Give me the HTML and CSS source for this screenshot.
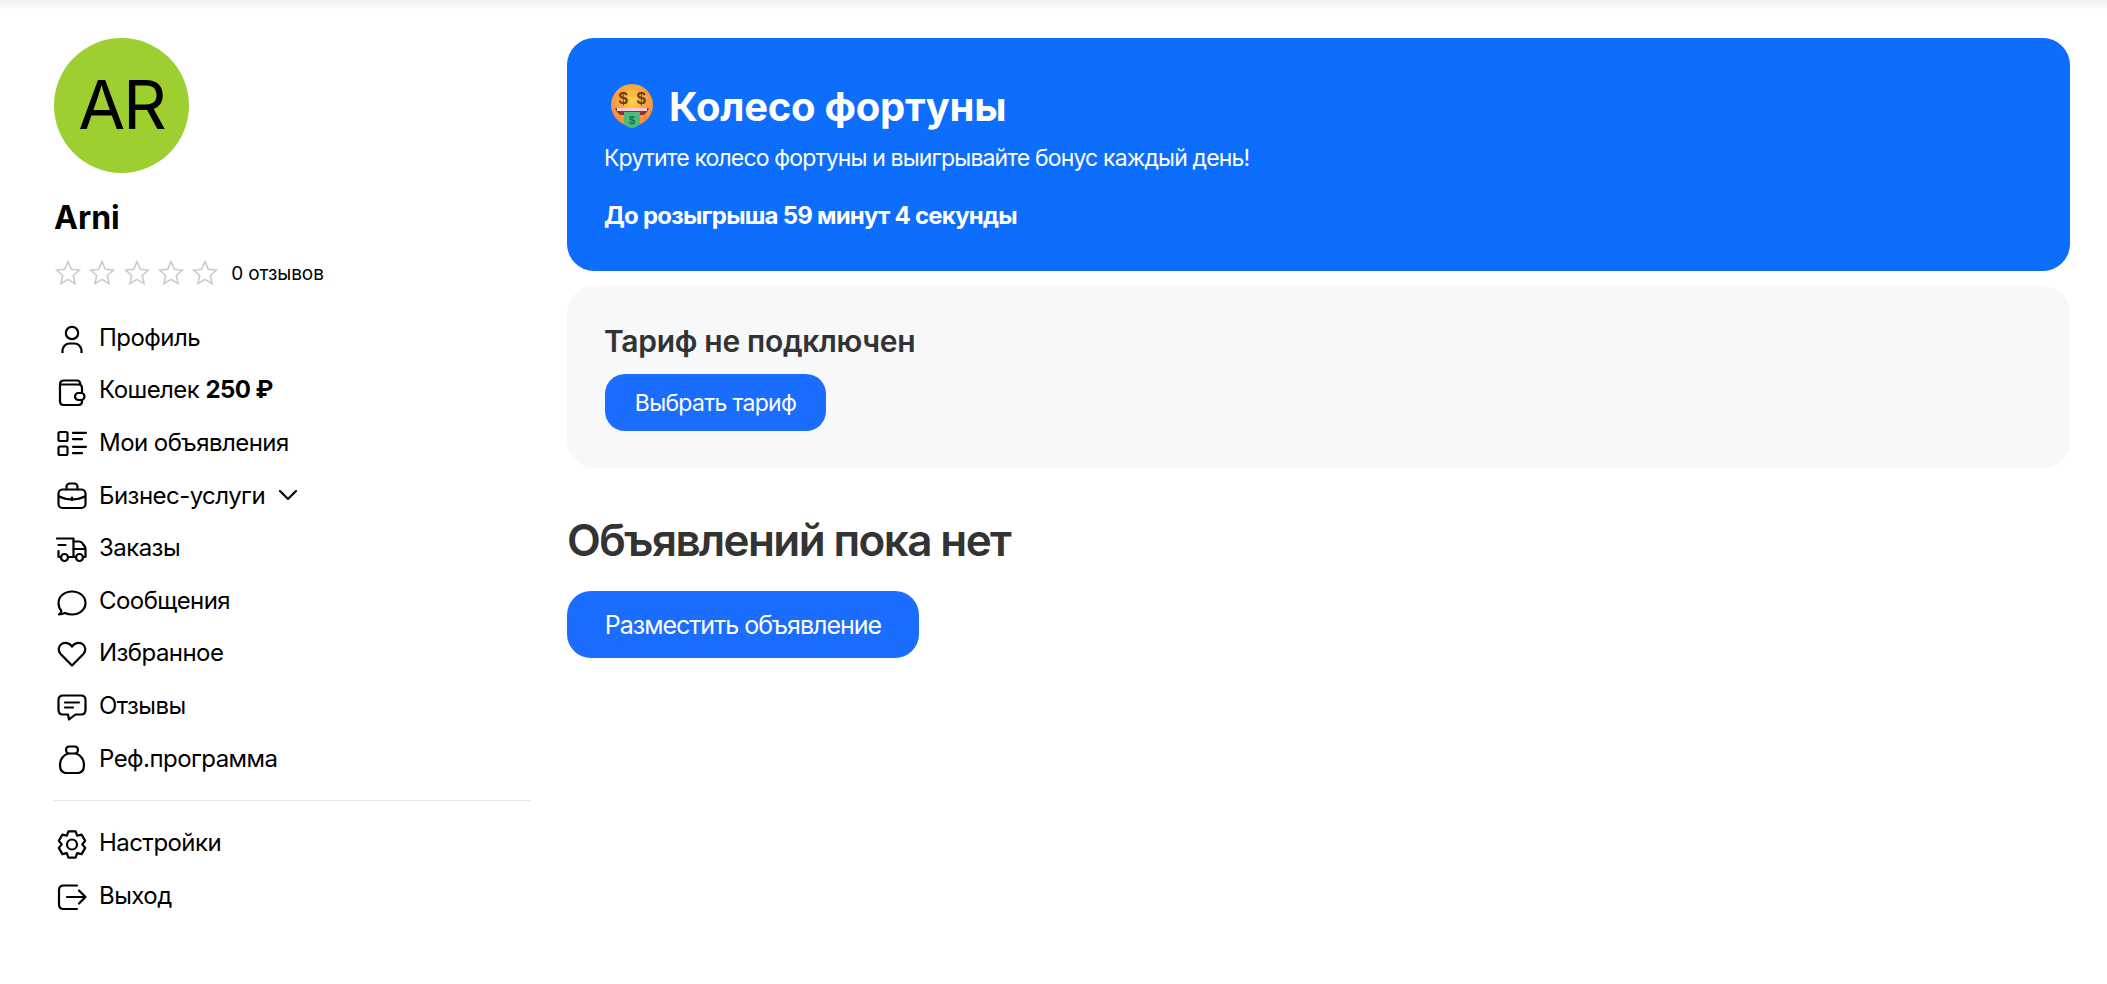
FILE: index.html
```html
<!DOCTYPE html>
<html lang="ru">
  <head>
    <meta charset="UTF-8" />
    <title>Профиль</title>
    <link rel="stylesheet" href="styles.css">
  </head>
  <body>
    <div class="top-shade"></div>

    <div class="page">
      <aside class="side">
        <div class="avatar">AR</div>
        <div class="name">Arni</div>

        <div class="rating">
          <div class="stars">
            <svg class="star" viewBox="0 0 24 24"><path d="M12 1.500l3.100 7 7.400.8-5.600 5 1.600 7.500-6.500-3.900-6.500 3.900 1.600-7.500-5.600-5 7.400-.8z"/></svg>
            <svg class="star" viewBox="0 0 24 24"><path d="M12 1.500l3.100 7 7.400.8-5.600 5 1.600 7.500-6.500-3.900-6.500 3.900 1.600-7.500-5.600-5 7.400-.8z"/></svg>
            <svg class="star" viewBox="0 0 24 24"><path d="M12 1.500l3.100 7 7.400.8-5.600 5 1.600 7.500-6.500-3.900-6.500 3.900 1.600-7.500-5.600-5 7.400-.8z"/></svg>
            <svg class="star" viewBox="0 0 24 24"><path d="M12 1.500l3.100 7 7.400.8-5.600 5 1.600 7.500-6.500-3.900-6.500 3.900 1.600-7.500-5.600-5 7.400-.8z"/></svg>
            <svg class="star" viewBox="0 0 24 24"><path d="M12 1.500l3.100 7 7.400.8-5.600 5 1.600 7.500-6.500-3.900-6.500 3.900 1.600-7.500-5.600-5 7.400-.8z"/></svg>
          </div>
          <span class="reviews">0 отзывов</span>
        </div>

        <ul class="menu menu-main">
          <li>
            <svg class="ico" viewBox="0 0 32 32"><circle cx="16" cy="12" r="6.200"/><path d="M6.500 32v-2c0-4.300 3-7.500 7-7.500h5c4 0 7 3.200 7 7.500v2"/></svg>
            <span>Профиль</span>
          </li>
          <li>
            <svg class="ico" viewBox="0 0 32 32"><path d="M26 19v-5c0-2-1.300-3.500-3.500-3.500H4.500M26 26v1.500c0 2.200-1.300 3.500-3.500 3.500H8c-2.500 0-4-1.500-4-4V10.500C4 8 5.500 6.500 8 6.500h13c2 0 3.200 1.500 3.500 4"/><rect x="19" y="19" width="9.500" height="7" rx="3.500"/></svg>
            <span>Кошелек <b>250 ₽</b></span>
          </li>
          <li>
            <svg class="ico" viewBox="0 0 32 32"><rect x="2.500" y="6" width="9" height="9" rx="1.500"/><rect x="2.500" y="20.500" width="9" height="8.500" rx="1.500"/><path d="M17 6.800h13M17 13.200h9M17 20.800h13M17 27.200h9"/></svg>
            <span>Мои объявления</span>
          </li>
          <li>
            <svg class="ico" viewBox="0 0 32 32"><rect x="2.500" y="10.500" width="27" height="18.500" rx="4"/><path d="M10.500 10.500V8c0-2 1.500-3.500 3.500-3.500h4c2 0 3.500 1.500 3.500 3.500v2.500"/><path d="M3 17.500c4 2 8.500 2.800 13 2.800s9-.8 13-2.800"/><path d="M16 18.500v2.500"/></svg>
            <span>Бизнес-услуги</span>
            <svg class="chevron" viewBox="0 0 18 10"><path d="M1 1l8 8 8-8"/></svg>
          </li>
          <li>
            <svg class="ico" viewBox="0 0 32 32"><path d="M1 6.500h16.500v18.500h-5M4.500 25H2.500v-6M2.500 13h7"/><path d="M17.500 9.500h5.500c1.500 0 2.500.6 3.300 1.700l2.400 3.300c.5.700.8 1.500.8 2.300V25H27M17.500 25H19.500M17.500 17h12"/><circle cx="8.500" cy="25.500" r="3.500"/><circle cx="23.500" cy="25.500" r="3.500"/></svg>
            <span>Заказы</span>
          </li>
          <li>
            <svg class="ico" viewBox="0 0 32 32"><path d="M3 30.500c1.800-1.200 2.600-2.500 2.200-3.900C3.500 24.700 2.500 22 2.500 19 2.500 12.400 8.500 7.500 16 7.500s13.500 4.900 13.500 11.500S23.500 30.500 16 30.500c-2.700 0-5-.6-7-1.600-1.800 1.100-3.800 1.600-6 1.600z"/></svg>
            <span>Сообщения</span>
          </li>
          <li>
            <svg class="ico" viewBox="0 0 32 32"><path d="M16 28.500L4.800 17.300C1.500 14 2.200 9 5.700 6.900 9 5 13.500 6 16 9.500 18.500 6 23 5 26.300 6.900c3.500 2.100 4.200 7.100.9 10.400z"/></svg>
            <span>Избранное</span>
          </li>
          <li>
            <svg class="ico" viewBox="0 0 32 32"><path d="M7 6.500h18c2.800 0 4.500 1.700 4.500 4.500v10c0 2.800-1.700 4.500-4.500 4.500h-5.500L13 30.500l-1-5H7c-2.800 0-4.500-1.700-4.500-4.500V11c0-2.800 1.700-4.500 4.500-4.500z"/><path d="M9 13.500h14M9 18.500h8"/></svg>
            <span>Отзывы</span>
          </li>
          <li>
            <svg class="ico" viewBox="0 0 32 32"><path d="M12 11.500C7 13.500 4 18 4 23c0 5 2.500 8 6.500 8h11c4 0 6.500-3 6.500-8 0-5-3-9.500-8-11.500z"/><path d="M12 11.500c-1.500-1-2-2-2-3.500 0-2.200 1.500-3.500 3.500-3.500h5c2 0 3.500 1.300 3.500 3.500 0 1.500-.5 2.500-2 3.500"/></svg>
            <span>Реф.программа</span>
          </li>
        </ul>

        <div class="line"></div>

        <ul class="menu">
          <li>
            <svg class="ico" viewBox="0 0 32 32"><path d="M12.400 4.300h7.200l1.600 4.300 4.400-1 3.600 6.300-3 3.500 3 3.500-3.600 6.200-4.400-1-1.600 4.600h-7.200l-1.600-4.600-4.400 1-3.600-6.200 3-3.500-3-3.500 3.600-6.300 4.400 1z"/><circle cx="16" cy="17.500" r="5"/></svg>
            <span>Настройки</span>
          </li>
          <li>
            <svg class="ico" viewBox="0 0 32 32"><path d="M21 6.500H7.500c-3 0-4.500 1.500-4.500 4.500v14.500c0 3 1.500 4.500 4.500 4.500H21"/><path d="M11 18h18M23 11.500l6.500 6.500-6.500 6.500"/></svg>
            <span>Выход</span>
          </li>
        </ul>
      </aside>

      <main class="content">
        <section class="promo">
          <h2 class="promo-title">
            <svg class="emoji" viewBox="0 0 46 46">
              <defs>
                <radialGradient id="face" cx="50%" cy="40%" r="60%">
                  <stop offset="0" stop-color="#ffd24a"/>
                  <stop offset="1" stop-color="#f5883a"/>
                </radialGradient>
              </defs>
              <circle cx="23" cy="22" r="21" fill="url(#face)"/>
              <text x="14" y="21" class="emoji-eye">$</text>
              <text x="32" y="21" class="emoji-eye">$</text>
              <path d="M6 25h34c-1 3-3 5-5 7H11c-2-2-4-4-5-7z" fill="#8b2f3c"/>
              <path d="M8 25h30v3H8z" fill="#ffc9d6"/>
              <path d="M15 29h16v9c0 4-3.500 7-8 7s-8-3-8-7z" fill="#4fb87c"/>
              <text x="23" y="41" class="emoji-tongue">$</text>
            </svg>
            <span>Колесо фортуны</span>
          </h2>
          <p class="promo-text">Крутите колесо фортуны и выигрывайте бонус каждый день!</p>
          <p class="promo-timer">До розыгрыша 59 минут 4 секунды</p>
        </section>

        <section class="tariff">
          <h3 class="tariff-title">Тариф не подключен</h3>
          <a class="btn btn-small" href="###">Выбрать тариф</a>
        </section>

        <h1 class="empty-title">Объявлений пока нет</h1>
        <a class="btn btn-big" href="###">Разместить объявление</a>
      </main>
    </div>
  </body>
</html>
```

FILE: styles.css
```css
* {
  box-sizing: border-box;
}

body {
  margin: 0;
  background: #fff;
  color: #000;
  font-family: Inter, "Noto Sans", sans-serif;
}

.top-shade {
  height: 10px;
  background: linear-gradient(#eff1f2, #fff);
}

.page {
  display: flex;
  gap: 37px;
  padding: 28px 37px 0 54px;
}

/* left column */
.side {
  width: 476px;
  flex-shrink: 0;
}

.avatar {
  width: 135px;
  height: 135px;
  padding-bottom: 3px;
  border-radius: 50%;
  background: #9ccf2f;
  display: flex;
  align-items: center;
  justify-content: center;
  font-size: 68px;
  letter-spacing: -2px;
}

.name {
  margin-top: 25px;
  font-size: 32px;
  line-height: 40px;
  font-weight: 700;
}

.rating {
  display: flex;
  align-items: center;
  margin-top: 20px;
  height: 30px;
}

.stars {
  display: flex;
  gap: 8.300px;
  margin: 0 13px 0 1px;
}

.star {
  width: 26px;
  height: 26px;
  fill: none;
  stroke: #c9cbcf;
  stroke-width: 1.5;
}

.reviews {
  font-size: 19px;
  letter-spacing: -0.1px;
}

.menu {
  list-style: none;
  margin: 0;
  padding: 0;
}

.menu-main {
  margin-top: 23px;
}

.menu li {
  display: flex;
  align-items: center;
  height: 52.6px;
  font-size: 24px;
  letter-spacing: -0.55px;
}

.menu b {
  font-weight: 700;
}

.ico {
  width: 32px;
  height: 32px;
  margin: 0 11px 0 2px;
  flex-shrink: 0;
  fill: none;
  stroke: #000;
  stroke-width: 2.2;
  stroke-linecap: round;
  stroke-linejoin: round;
}

.chevron {
  width: 18px;
  height: 10px;
  margin-left: 14px;
  fill: none;
  stroke: #000;
  stroke-width: 2.2;
  stroke-linecap: round;
  stroke-linejoin: round;
}

.line {
  height: 1px;
  margin: 16px 0 15px;
  background: #e6e6e6;
}

/* right column */
.content {
  flex: 1;
}

.promo {
  height: 233px;
  padding: 38px 37px;
  border-radius: 27px;
  background: #0d6efd;
  color: #fff;
}

.promo-title {
  display: flex;
  align-items: center;
  gap: 14px;
  margin: 0;
  padding-left: 5px;
  height: 60px;
  font-size: 40px;
  font-weight: 700;
  letter-spacing: -0.25px;
}

.emoji {
  width: 46px;
  height: 46px;
}

.emoji-eye {
  fill: #6b3a1e;
  font-family: "Liberation Sans", sans-serif;
  font-size: 17px;
  font-weight: 700;
  text-anchor: middle;
}

.emoji-tongue {
  fill: #1f6b48;
  font-family: "Liberation Sans", sans-serif;
  font-size: 11px;
  font-weight: 700;
  text-anchor: middle;
}

.promo-text {
  margin: 6px 0 0;
  font-size: 23px;
  line-height: 32px;
  letter-spacing: -0.85px;
}

.promo-timer {
  margin: 26px 0 0;
  font-size: 24px;
  line-height: 32px;
  font-weight: 700;
  letter-spacing: -0.77px;
}

.tariff {
  height: 182px;
  margin-top: 15px;
  padding: 36px 37px;
  border-radius: 27px;
  background: #f7f8fa;
}

.tariff-title {
  margin: 0;
  font-size: 30px;
  line-height: 38px;
  font-weight: 600;
  letter-spacing: -0.3px;
  color: #333;
}

.btn {
  display: inline-flex;
  align-items: center;
  justify-content: center;
  background: #1a6dff;
  color: #fff;
  text-decoration: none;
  letter-spacing: -0.7px;
}

.btn-small {
  width: 221px;
  height: 57px;
  margin: 14px 0 0 1px;
  border-radius: 20px;
  font-size: 23px;
}

.empty-title {
  margin: 44px 0 0;
  font-size: 44px;
  line-height: 56px;
  font-weight: 600;
  letter-spacing: -1.6px;
  color: #333;
}

.btn-big {
  width: 352px;
  height: 67px;
  margin-top: 23px;
  border-radius: 24px;
  font-size: 25px;
  letter-spacing: -1px;
}
```
